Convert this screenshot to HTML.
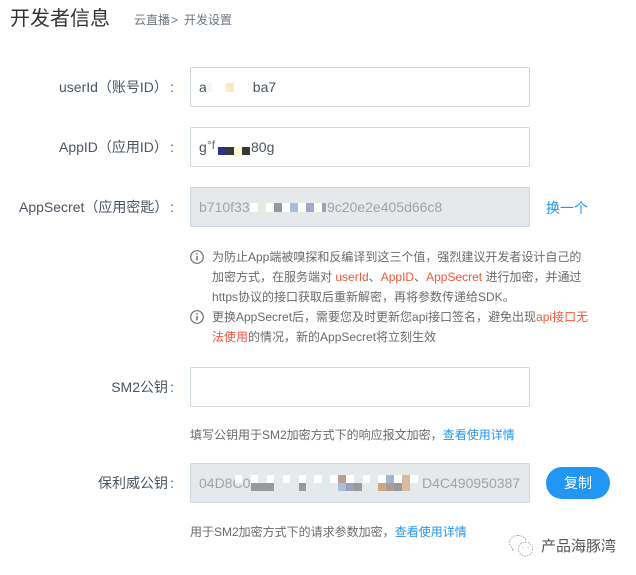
<!DOCTYPE html>
<html lang="zh"><head><meta charset="utf-8"><title>开发者信息</title>
<style>
html,body{margin:0;padding:0;background:#fff}
body{width:636px;height:575px;position:relative;overflow:hidden;font-family:"Liberation Sans","Noto Sans CJK SC",sans-serif;color:#555}
.t{position:absolute;white-space:nowrap}
.lab{position:absolute;right:468px;font-size:14px;line-height:20px;color:#4a5560;white-space:nowrap}
.labl{position:absolute;font-size:14px;line-height:20px;color:#4a5560;white-space:nowrap}
.col{position:absolute;left:170px;font-size:14px;line-height:20px;color:#4a5560}
.inp{position:absolute;left:190px;width:338px;height:38px;border:1px solid #ced7dd;border-radius:2px;background:#fff}
.dis{background:#e6e9ec}
.v{position:absolute;font-size:14px;line-height:20px;color:#4a5560;white-space:nowrap}
.g{color:#a0a3a6}
.h{position:absolute;left:212px;font-size:12px;line-height:20px;color:#6a6a6a;white-space:nowrap}
.r{color:#f5553a}
.b{color:#2196f3}
i{position:absolute;display:block}
svg{position:absolute}
</style></head><body>
<div class="t" style="left:10px;top:5px;font-size:20px;line-height:28px;color:#333">开发者信息</div>
<div class="t" style="left:134px;top:10px;font-size:12px;line-height:20px;color:#6b7680">云直播</div>
<div class="t" style="left:171px;top:10px;font-size:12px;line-height:20px;color:#6b7680">&gt;</div>
<div class="t" style="left:184px;top:10px;font-size:12px;line-height:20px;color:#6b7680">开发设置</div>

<div class="labl" style="left:59px;top:77px">userId（账号ID）</div><div class="col" style="top:77px">:</div>
<div class="inp" style="top:67px"></div>
<div class="v" style="left:199px;top:77px">a</div><div class="v" style="left:245px;top:77px">3ba7</div>
<i style="left:206px;top:81px;width:46px;height:13px;background:#fff"></i>
<i style="left:206px;top:83px;width:6px;height:9px;background:#f0f8f8"></i>
<i style="left:226px;top:83px;width:8px;height:9px;background:#fdeac4"></i>

<div class="labl" style="left:59px;top:137px">AppID（应用ID）</div><div class="col" style="top:137px">:</div>
<div class="inp" style="top:127px"></div>
<div class="v" style="left:199px;top:137px">g</div><div class="v" style="left:207px;top:135px;font-size:12px;color:#667">°f</div><div class="v" style="left:251px;top:137px">80g</div>
<i style="left:218px;top:147px;width:8px;height:8px;background:#2f2f8c"></i>
<i style="left:226px;top:147px;width:8px;height:8px;background:#383838"></i>
<i style="left:234px;top:147px;width:8px;height:8px;background:#fdf8d0"></i>
<i style="left:242px;top:147px;width:8px;height:8px;background:#383838"></i>

<div class="labl" style="left:19px;top:197px">AppSecret（应用密匙）</div><div class="col" style="top:197px">:</div>
<div class="inp dis" style="top:187px"></div>
<div class="v g" style="left:199px;top:197px">b710f33</div><div class="v g" style="left:327px;top:197px">9c20e2e405d66c8</div>
<i style="left:250px;top:203px;width:72px;height:9px;background:#fff"></i>
<i style="left:258px;top:203px;width:8px;height:9px;background:#e8e8dc"></i>
<i style="left:274px;top:203px;width:8px;height:9px;background:#999"></i>
<i style="left:290px;top:203px;width:8px;height:9px;background:#a8bcdc"></i>
<i style="left:306px;top:203px;width:8px;height:9px;background:#a0a8c4"></i>
<i style="left:322px;top:203px;width:4px;height:9px;background:#a99ab8"></i>
<div class="t b" style="left:546px;top:198px;font-size:14px;line-height:20px">换一个</div>

<svg style="left:190px;top:250px" width="14" height="14" viewBox="0 0 14 14" fill="none" stroke="#707070" stroke-width="1.2"><circle cx="7" cy="7" r="6.300"/><path d="M7 6v4.400M7 3.200v1.500" stroke-width="1.500"/></svg>
<div class="h" style="top:247px">为防止App端被嗅探和反编译到这三个值，强烈建议开发者设计自己的</div>
<div class="h" style="top:267px">加密方式，在服务端对 <span class="r">userId</span>、<span class="r">AppID</span>、<span class="r">AppSecret</span> 进行加密，并通过</div>
<div class="h" style="top:287px">https协议的接口获取后重新解密，再将参数传递给SDK。</div>
<svg style="left:190px;top:310px" width="14" height="14" viewBox="0 0 14 14" fill="none" stroke="#707070" stroke-width="1.2"><circle cx="7" cy="7" r="6.300"/><path d="M7 6v4.400M7 3.200v1.500" stroke-width="1.500"/></svg>
<div class="h" style="top:307px">更换AppSecret后，需要您及时更新您api接口签名，避免出现<span class="r">api接口无</span></div>
<div class="h" style="top:327px"><span class="r">法使用</span>的情况，新的AppSecret将立刻生效</div>

<div class="lab" style="top:377px">SM2公钥</div><div class="col" style="top:377px">:</div>
<div class="inp" style="top:367px"></div>
<div class="t" style="left:190px;top:425px;font-size:12px;line-height:20px;color:#6a6a6a">填写公钥用于SM2加密方式下的响应报文加密，<span class="b">查看使用详情</span></div>

<div class="lab" style="top:473px">保利威公钥</div><div class="col" style="top:473px">:</div>
<div class="inp dis" style="top:463px"></div>
<div class="v g" style="left:199px;top:473px">04D8C0</div><div class="v g" style="left:422px;top:473px">D4C490950387</div>
<i style="left:235px;top:475px;width:7px;height:8px;background:#fff"></i>
<i style="left:251px;top:475px;width:7px;height:8px;background:#fff"></i>
<i style="left:267px;top:475px;width:7px;height:8px;background:#fff"></i>
<i style="left:283px;top:475px;width:7px;height:8px;background:#fff"></i>
<i style="left:299px;top:475px;width:7px;height:8px;background:#fff"></i>
<i style="left:314px;top:475px;width:8px;height:8px;background:#fff"></i>
<i style="left:322px;top:475px;width:8px;height:16px;background:#dcecec"></i>
<i style="left:330px;top:475px;width:8px;height:8px;background:#fff"></i>
<i style="left:338px;top:475px;width:8px;height:8px;background:#b8a090"></i>
<i style="left:346px;top:475px;width:8px;height:8px;background:#fff"></i>
<i style="left:363px;top:475px;width:7px;height:8px;background:#fff"></i>
<i style="left:378px;top:475px;width:8px;height:8px;background:#fff"></i>
<i style="left:386px;top:475px;width:8px;height:8px;background:#a0b4d4"></i>
<i style="left:394px;top:475px;width:8px;height:8px;background:#fff"></i>
<i style="left:402px;top:475px;width:8px;height:16px;background:#d8bca0"></i>
<i style="left:410px;top:475px;width:8px;height:8px;background:#fff"></i>
<i style="left:251px;top:483px;width:23px;height:8px;background:#999"></i>
<i style="left:299px;top:483px;width:7px;height:8px;background:#999"></i>
<i style="left:338px;top:483px;width:8px;height:8px;background:#a8bcdc"></i>
<i style="left:346px;top:483px;width:8px;height:8px;background:#a0a0bc"></i>
<i style="left:354px;top:483px;width:8px;height:8px;background:#999"></i>
<i style="left:378px;top:483px;width:8px;height:8px;background:#c8a888"></i>
<i style="left:386px;top:483px;width:8px;height:8px;background:#b09a98"></i>
<i style="left:394px;top:483px;width:8px;height:8px;background:#999"></i>
<div class="t" style="left:546px;top:467px;width:64px;height:32px;border-radius:16px;background:#2196f3;color:#fff;font-size:14px;line-height:32px;text-align:center">复制</div>
<div class="t" style="left:190px;top:522px;font-size:12px;line-height:20px;color:#6a6a6a">用于SM2加密方式下的请求参数加密，<span class="b">查看使用详情</span></div>

<svg style="left:508px;top:534px" width="28" height="24" viewBox="0 0 28 24" fill="none" stroke="#aaa" stroke-width="1" stroke-dasharray="1.500 1.200"><path d="M10 1.500C5.500 1.500 1.500 4.500 1.500 8.500c0 2.300 1.300 4.200 3.200 5.500l-.7 2.500 3-1.500"/><path d="M10 1.500c4 0 7.500 2.300 8.300 5.500"/><ellipse cx="17.500" cy="15" rx="7" ry="7"/><path d="M15 13v.5M20 13v.5" stroke-dasharray="none" stroke="#777"/></svg>
<div class="t" style="left:541px;top:536px;font-size:15px;line-height:22px;color:#555">产品海豚湾</div>
</body></html>
